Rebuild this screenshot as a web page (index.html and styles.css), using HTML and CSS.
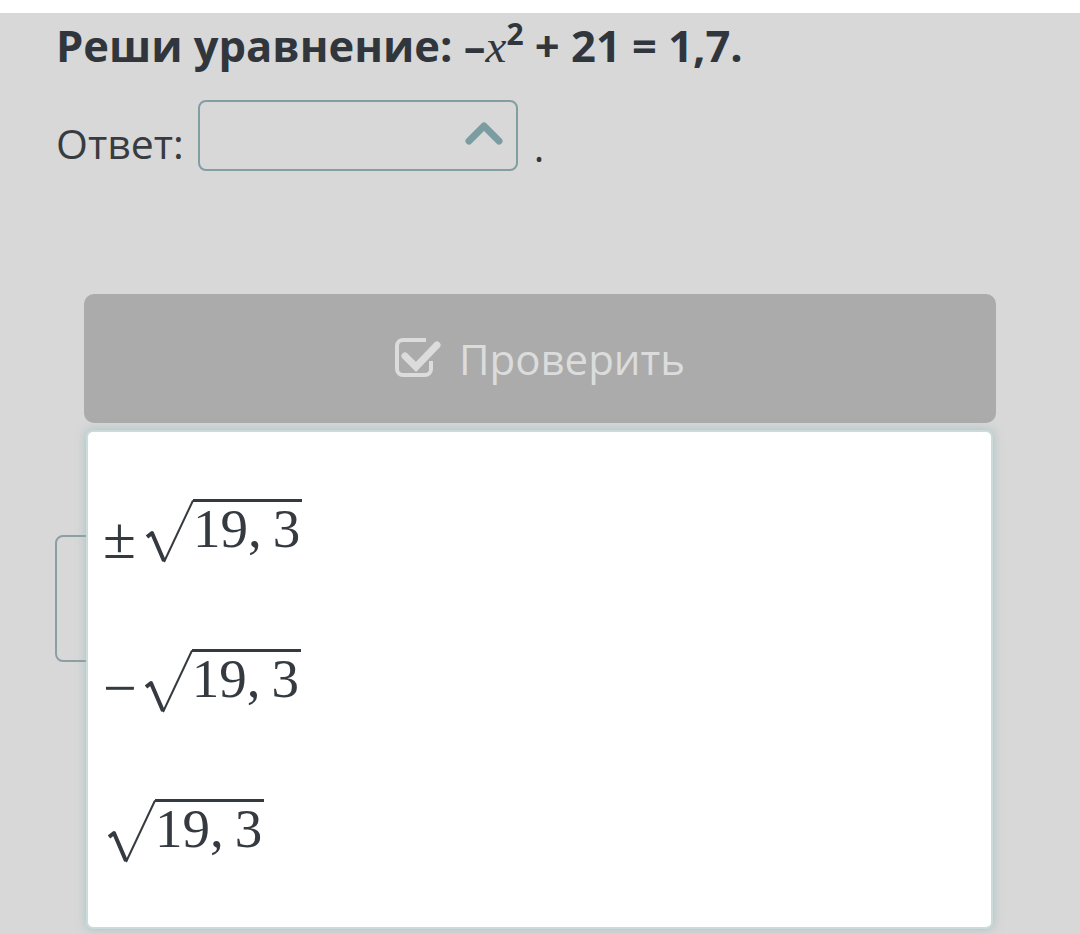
FILE: index.html
```html
<!DOCTYPE html>
<html lang="ru">
<head>
    <meta charset="UTF-8">
    <title>Реши уравнение</title>
    <meta name="viewport" content="width=device-width, initial-scale=1">
    <link rel="stylesheet" href="styles.css">
</head>
<body>
    <div class="topbar"></div>

    <div class="task">
        <h1 class="question">Реши уравнение: –<span class="mvar">x</span><sup>2</sup> + 21 = 1,7.</h1>

        <div class="answer-row">
            <span class="answer-label">Ответ:</span>
            <div class="select-box">
                <svg class="chevron" width="40" height="30" viewBox="0 0 40 30">
                    <path d="M5 24 L20 9 L35 24" fill="none" stroke="#7b9ca1" stroke-width="7" stroke-linecap="round" stroke-linejoin="round"/>
                </svg>
            </div>
            <span class="answer-dot">.</span>
        </div>

        <button class="check-btn" disabled>
            <svg class="check-icon" width="46" height="40" viewBox="0 0 46 40">
                <path d="M31 3 H8 a6 6 0 0 0 -6 6 V32 a6 6 0 0 0 6 6 H30 a6 6 0 0 0 6 -6 V24" fill="none" stroke="#dcdcdc" stroke-width="4"/>
                <path d="M10 19 L21 30 L42 8" fill="none" stroke="#dcdcdc" stroke-width="7" stroke-linecap="round"/>
            </svg>
            Проверить
        </button>

        <div class="second-field"></div>

        <!-- открытый список вариантов -->
        <div class="dropdown">
            <div class="option">
                <span class="sign">±</span>
                <span class="sqrt">
                    <svg class="radical" width="48" height="66" viewBox="0 0 48 66">
                        <path d="M1 38 L6 34 L18 62" fill="none" stroke="#353a40" stroke-width="4" stroke-linejoin="round"/>
                        <path d="M18 63 L47 1.5" fill="none" stroke="#353a40" stroke-width="2"/>
                    </svg>
                    <span class="radicand">19,&thinsp;3</span>
                </span>
            </div>
            <div class="option">
                <span class="sign minus">−</span>
                <span class="sqrt">
                    <svg class="radical" width="48" height="66" viewBox="0 0 48 66">
                        <path d="M1 38 L6 34 L18 62" fill="none" stroke="#353a40" stroke-width="4" stroke-linejoin="round"/>
                        <path d="M18 63 L47 1.5" fill="none" stroke="#353a40" stroke-width="2"/>
                    </svg>
                    <span class="radicand">19,&thinsp;3</span>
                </span>
            </div>
            <div class="option">
                <span class="sqrt">
                    <svg class="radical" width="48" height="66" viewBox="0 0 48 66">
                        <path d="M1 38 L6 34 L18 62" fill="none" stroke="#353a40" stroke-width="4" stroke-linejoin="round"/>
                        <path d="M18 63 L47 1.5" fill="none" stroke="#353a40" stroke-width="2"/>
                    </svg>
                    <span class="radicand">19,&thinsp;3</span>
                </span>
            </div>
        </div>
    </div>
</body>
</html>
```

FILE: styles.css
```css
body {
    margin: 0;
    background: #d8d8d8;
    font-family: "Open Sans", "Noto Sans", sans-serif;
    color: #30363c;
    height: 934px;
    overflow: hidden;
}

.topbar {
    height: 13px;
    background: #fff;
}

.task {
    position: relative;
    padding: 8px 0 0 56px;
}

.question {
    margin: 0;
    font-size: 43.5px;
    line-height: 50px;
    font-weight: 700;
}

.mvar {
    font-family: "Liberation Serif", serif;
    font-style: italic;
    font-weight: 400;
    font-size: 47px;
}

.question sup {
    font-size: 30px;
    line-height: 0;
    vertical-align: 17px;
}

.answer-row {
    display: flex;
    align-items: center;
    margin-top: 29px;
    height: 71px;
}

.answer-label {
    font-size: 41px;
    color: #383c41;
    margin-right: 14px;
    padding-top: 14px;
}

.select-box {
    width: 304px;
    height: 67px;
    border: 2px solid #819ea3;
    border-radius: 8px;
    display: flex;
    align-items: center;
    justify-content: flex-end;
    padding-right: 12px;
}

.chevron {
    margin-top: -7px;
}

.answer-dot {
    font-size: 40px;
    margin-left: 16px;
    padding-top: 22px;
}

.check-btn {
    display: flex;
    align-items: center;
    justify-content: center;
    gap: 18px;
    margin: 123px 0 0 28px;
    width: 912px;
    height: 129px;
    border: none;
    border-radius: 10px;
    background: #ababab;
    color: #dcdcdc;
    font-family: "Open Sans", "Noto Sans", sans-serif;
    font-size: 42px;
    padding: 0;
}

.check-icon {
    margin-top: -4px;
}

.second-field {
    margin-top: 112px;
    margin-left: -1px;
    width: 300px;
    height: 123px;
    border: 2px solid #8d9fa2;
    border-radius: 8px;
}

.dropdown {
    position: absolute;
    left: 88px;
    top: 419px;
    width: 903px;
    height: 495px;
    box-sizing: border-box;
    padding: 25px 0 15px 0;
    background: #fff;
    border-radius: 5px;
    box-shadow: 0 0 0 2px #cbdada, 0 0 10px 3px rgba(150, 180, 182, 0.55);
}

.option {
    height: 150px;
    display: flex;
    align-items: center;
    padding-left: 15px;
    font-family: "Liberation Serif", "DejaVu Serif", serif;
    color: #353a40;
}

.option:last-child {
    padding-left: 20px;
}

.sign {
    font-size: 60px;
    line-height: 1;
    margin-right: 10px;
    margin-top: 12px;
}

.sign.minus {
    margin-right: 8px;
}

.sqrt {
    display: inline-flex;
    align-items: flex-start;
}

.radicand {
    border-top: 3px solid #353a40;
    font-size: 55px;
    line-height: 42px;
    padding: 6px 2px 0 0;
    margin-left: -1px;
}
```
